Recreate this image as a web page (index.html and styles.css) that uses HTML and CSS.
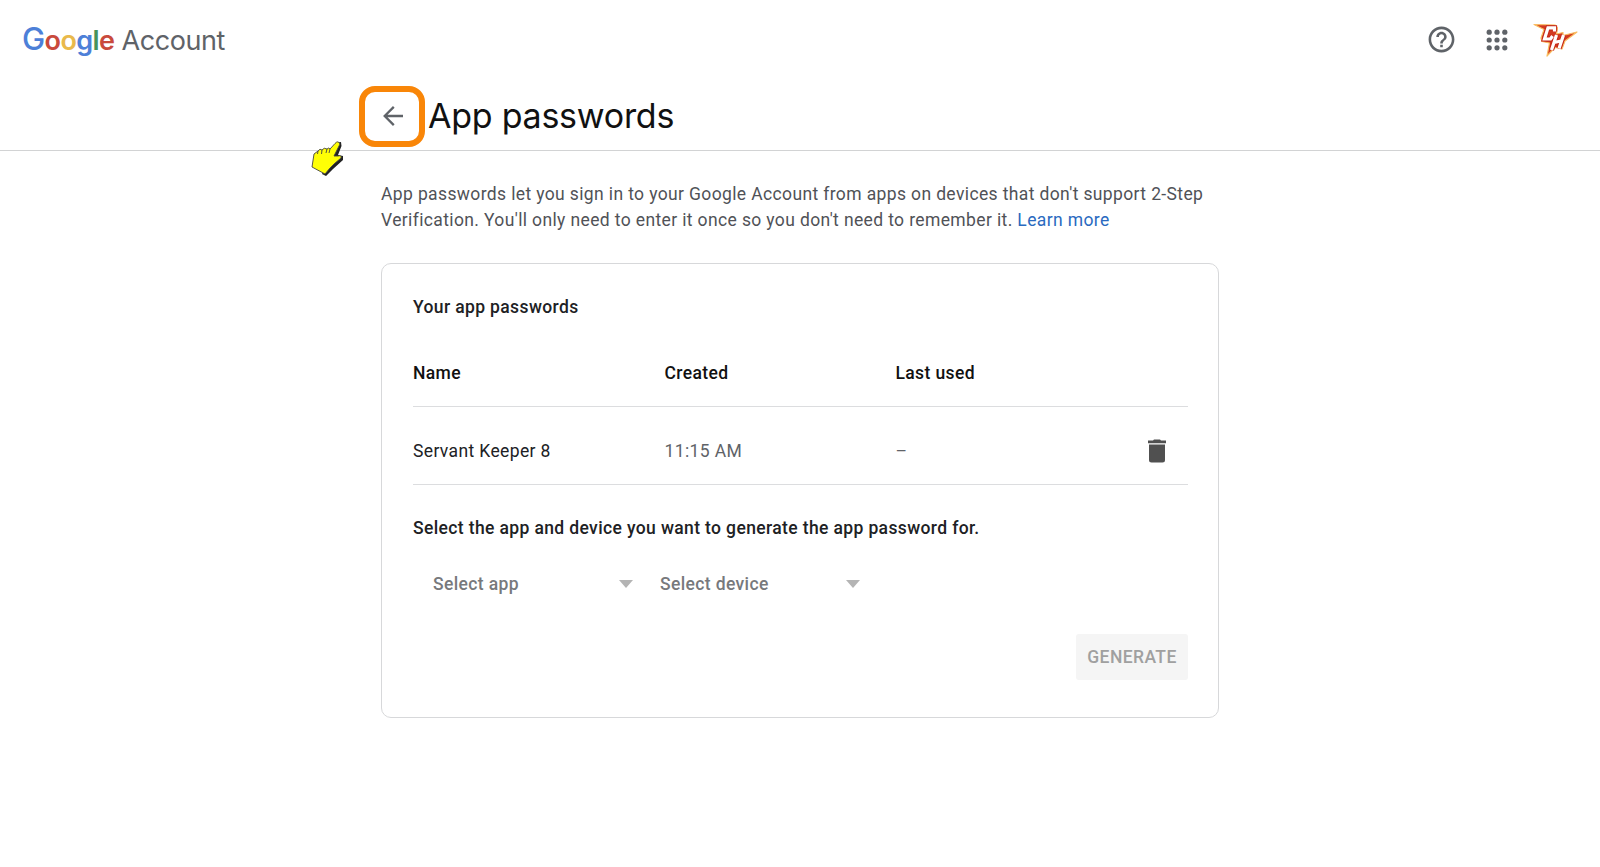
FILE: index.html
```html
<!DOCTYPE html>
<html lang="en">
<head>
  <meta charset="UTF-8">
  <title>App passwords</title>
  <meta name="viewport" content="width=device-width, initial-scale=1.0">
  <link rel="stylesheet" href="styles.css">
</head>
<body>
  <header class="topbar">
    <div class="logo">
      <span class="google"><span class="blue cap">G</span><span class="red">o</span><span class="yellow">o</span><span class="blue">g</span><span class="green">l</span><span class="red">e</span></span>
      <span class="account">Account</span>
    </div>
    <div class="tools">
      <svg class="help" viewBox="0 0 24 24" width="31" height="31">
        <path fill="#5f6368" d="M11 18h2v-2h-2v2zm1-16C6.480 2 2 6.480 2 12s4.480 10 10 10 10-4.480 10-10S17.520 2 12 2zm0 18c-4.410 0-8-3.590-8-8s3.590-8 8-8 8 3.590 8 8-3.590 8-8 8zm0-14c-2.210 0-4 1.790-4 4h2c0-1.100.9-2 2-2s2 .9 2 2c0 2-3 1.750-3 5h2c0-2.250 3-2.500 3-5 0-2.210-1.790-4-4-4z"/>
      </svg>
      <svg class="apps" viewBox="0 0 22 22" width="22" height="22">
        <g fill="#5f6368">
          <circle cx="3.200" cy="3.200" r="2.600"/><circle cx="11" cy="3.200" r="2.600"/><circle cx="18.800" cy="3.200" r="2.600"/>
          <circle cx="3.200" cy="11" r="2.600"/><circle cx="11" cy="11" r="2.600"/><circle cx="18.800" cy="11" r="2.600"/>
          <circle cx="3.200" cy="18.800" r="2.600"/><circle cx="11" cy="18.800" r="2.600"/><circle cx="18.800" cy="18.800" r="2.600"/>
        </g>
      </svg>
      <svg class="avatar" viewBox="0 0 48 34" width="48" height="34">
        <path fill="#d23a20" stroke="#f9bd62" stroke-width="1.200" stroke-linejoin="round" d="M2 1.500L23 2 25.500 5 24.500 11 31 9.500 31 12.500 45 9 33 18 30 26 23 24.500 15 33 17.500 20 10 18.500 9 15 12 6.500Z"/>
        <g fill="none" stroke="#c52719" stroke-width="5.200">
          <path d="M22.500 8.500V4.800H16L12.500 16H18.500L20.500 13"/>
          <path d="M24.500 12L19.500 27M31.500 12L27 25.500M22 19.500L29 18"/>
        </g>
        <g fill="none" stroke="#fff" stroke-width="3.200">
          <path d="M22.500 8.500V4.800H16L12.500 16H18.500L20.500 13"/>
          <path d="M24.500 12L19.500 27M31.500 12L27 25.500M22 19.500L29 18"/>
        </g>
      </svg>
    </div>
  </header>

  <div class="titlebar">
    <a class="back" href="#">
      <svg viewBox="0 0 20 20" width="20" height="20"><path fill="none" stroke="#5f6368" stroke-width="2.300" d="M20 10H2M10.800 .9L1.700 10l9.100 9.100"/></svg>
    </a>
    <h1>App passwords</h1>
    <svg class="pointer" viewBox="0 0 34 38" width="34" height="38">
      <path fill="#222" d="M27 2.500L31 2 31.500 6 28 15 33 16 33 20 23 29 16 36 12 34z"/>
      <path fill="#ffff05" stroke="#444" stroke-width=".9" stroke-linejoin="round" d="M4 14L8 11Q10 8 12 10Q14 7 17 9Q19 7 20 9L25 3.500Q28 0 30 4L24 16 28 16Q32 15 31 18L24 24 20 28 15 34 2 27Z"/>
      <path fill="none" stroke="#444" stroke-width=".9" d="M8 11l-.5 3M12 10l-.5 4M17 9l-1 4M20 9l-1 4"/>
    </svg>
  </div>

  <main>
    <p class="intro">App passwords let you sign in to your Google Account from apps on devices that don't support 2-Step<br>Verification. You'll only need to enter it once so you don't need to remember it. <a href="#">Learn more</a></p>

    <section class="card">
      <h2>Your app passwords</h2>
      <div class="row head">
        <span>Name</span>
        <span>Created</span>
        <span>Last used</span>
      </div>
      <div class="row">
        <span class="name">Servant Keeper 8</span>
        <span>11:15 AM</span>
        <span>–</span>
        <svg viewBox="0 0 18 24" width="18" height="24"><path fill="#505050" d="M5 1.500L6 .5h6l1 1h5v2.700H0V1.500zM1 5.500h16v15.500q0 2.500-2.500 2.500h-11Q1 23.500 1 21z"/></svg>
      </div>
      <p class="prompt">Select the app and device you want to generate the app password for.</p>
      <div class="selects">
        <div class="select">Select app<i class="arrow"></i></div>
        <div class="select">Select device<i class="arrow"></i></div>
      </div>
      <button class="generate" disabled>GENERATE</button>
    </section>
  </main>
</body>
</html>
```

FILE: styles.css
```css
* {
  box-sizing: border-box;
}

body {
  margin: 0;
  background: #fff;
  color: #202124;
  font-family: Roboto, sans-serif;
  font-size: 17.5px;
  letter-spacing: 0.37px;
}

a {
  color: #2a6ac0;
  text-decoration: none;
}

.topbar {
  display: flex;
  justify-content: space-between;
  height: 80px;
  padding: 0 20px 0 22px;
}

.logo {
  display: flex;
  align-items: baseline;
  gap: 7px;
  padding-top: 19px;
  font-family: Inter, sans-serif;
  color: #5f6368;
  line-height: 40px;
  white-space: nowrap;
}

.google {
  font-size: 27px;
  font-weight: 600;
  letter-spacing: -0.6px;
}

.cap {
  font-size: 31px;
  font-weight: 500;
}

.account {
  font-size: 27px;
  letter-spacing: -0.4px;
}

.blue { color: #4d80d8; }
.red { color: #c94a3c; }
.yellow { color: #e9b94b; }
.green { color: #46935a; }

.tools {
  display: flex;
  align-items: center;
  height: 79px;
}

.apps {
  margin: 0 24px 0 29px;
}

.titlebar {
  position: relative;
  display: flex;
  height: 71px;
  padding-left: 359px;
  border-bottom: 1px solid #d2d3d4;
}

.back {
  display: flex;
  align-items: center;
  justify-content: center;
  width: 66px;
  height: 61px;
  margin-top: 6px;
  padding: 0 0 2px 1px;
  border: 6px solid #f98608;
  border-radius: 16px;
}

h1 {
  margin: 12px 0 0 3px;
  font-family: Inter, sans-serif;
  font-size: 34px;
  font-weight: 400;
  line-height: 48px;
  letter-spacing: -0.25px;
  color: #111;
}

/* hand cursor over the divider */
.pointer {
  position: absolute;
  left: 310px;
  top: 60px;
}

main {
  width: 838px;
  margin: 0 auto;
}

.intro {
  margin: 31px 0 30px;
  line-height: 25.5px;
  color: #505257;
  white-space: nowrap;
}

.card {
  display: flex;
  flex-direction: column;
  height: 455px;
  padding: 29px 30px 37px 31px;
  border: 1px solid #d7d8da;
  border-radius: 10px;
}

h2,
.prompt {
  margin: 0;
  font-size: 17.5px;
  font-weight: 500;
  line-height: 28px;
}

.row {
  display: grid;
  grid-template-columns: 251.5px 231px 252px 1fr;
  align-items: center;
  height: 78px;
  padding-top: 10px;
  border-bottom: 1px solid #dcdddf;
  color: #5f6368;
}

.head {
  height: 86px;
  padding-top: 18px;
  font-weight: 500;
  color: #111;
}

.name {
  color: #202124;
}

.prompt {
  margin-top: 29px;
}

.selects {
  display: flex;
  gap: 27px;
  padding: 28px 0 0 20px;
}

.select {
  display: flex;
  align-items: center;
  justify-content: space-between;
  width: 200px;
  height: 28px;
  font-weight: 500;
  color: #77797c;
}

.arrow {
  border: 7.5px solid transparent;
  border-top: 8px solid #b4b4b4;
  border-bottom: 0;
}

.generate {
  align-self: flex-end;
  width: 112px;
  height: 46px;
  margin-top: auto;
  padding: 0;
  border: 0;
  border-radius: 3px;
  background: #f5f5f5;
  color: #a0a0a0;
  font: 500 17.5px Roboto, sans-serif;
  letter-spacing: 0.4px;
}
```
